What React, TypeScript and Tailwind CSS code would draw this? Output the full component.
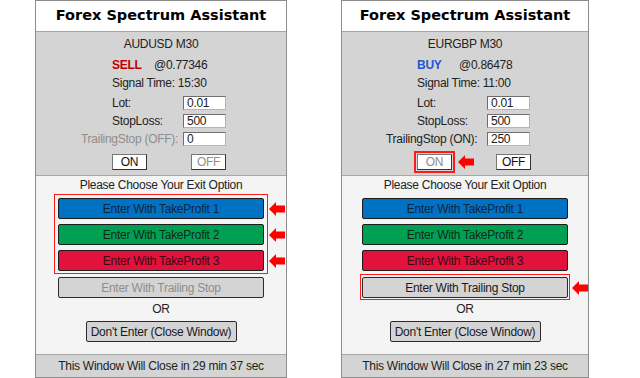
import React from 'react';

interface IPanel {
  width: string;
  indent: string;
  labelCol: string;
  pair: string;
  side: 'SELL' | 'BUY';
  price: string;
  time: string;
  stopLoss: string;
  trailing: string;
  trailOn: boolean;
  boxTakeProfit: boolean;
  boxTrailing: boolean;
  countdown: string;
  arrows: { left: string; top: string }[];
}

const txt = "font-['Liberation_Sans',Arial,sans-serif] text-[12px] tracking-[-0.27px]";

// little red pointer used for the annotations
const Arrow = ({ left, top }: { left: string; top: string }) => (
  <svg className={`absolute ${left} ${top}`} width="16" height="14" viewBox="0 0 16 14">
    <polygon points="0,7 7,0 7,3.5 16,3.5 16,10.5 7,10.5 7,14" fill="#ff0000" />
  </svg>
);

const Field = ({ value }: { value: string }) => (
  <div className="h-[14px] w-[43px] bg-white border border-[#6e6e6e] border-b-[#b5b5b5] border-r-[#b5b5b5] pl-[3px] flex items-center leading-none text-[#1a1a1a]">
    {value}
  </div>
);

function Panel(p: IPanel) {
  const disabledTrail = !p.trailOn;
  return (
    <div className={`relative flex flex-col h-[378px] ${p.width} border border-[#8c8c8c] bg-white ${txt} text-[#222]`}>
      {/* title */}
      <div className="h-[31px] shrink-0 flex items-center justify-center border-b border-[#a6a6a6] font-['DejaVu_Sans',Verdana,sans-serif] font-bold text-[14.5px] tracking-normal text-black">
        Forex Spectrum Assistant
      </div>

      {/* signal settings */}
      <div className="h-[144px] shrink-0 bg-[#d4d4d4] border-b border-[#a6a6a6] pt-[4px]">
        <div className="h-[16px] flex items-center justify-center">{p.pair}</div>
        <div className={`${p.indent}`}>
          <div className="mt-[5px] h-[16px] pl-[31px] flex items-center">
            <span className={`w-[42px] font-bold ${p.side === 'SELL' ? 'text-[#c00000]' : 'text-[#1e5ad2]'}`}>{p.side}</span>
            <span>@{p.price}</span>
          </div>
          <div className="mt-[2px] h-[16px] pl-[31px] flex items-center">Signal Time: {p.time}</div>
          <div className="mt-[3px]">
            <div className={`grid ${p.labelCol} h-[18px] items-center`}>
              <span className="pl-[31px]">Lot:</span>
              <Field value="0.01" />
            </div>
            <div className={`grid ${p.labelCol} h-[18px] items-center`}>
              <span className="pl-[31px]">StopLoss:</span>
              <Field value={p.stopLoss} />
            </div>
            <div className={`grid ${p.labelCol} h-[18px] items-center`}>
              <span className={disabledTrail ? 'text-[#8e8e8e]' : ''}>
                TrailingStop ({p.trailOn ? 'ON' : 'OFF'}):
              </span>
              <Field value={p.trailing} />
            </div>
          </div>
          <div className="mt-[6px] pl-[31px] flex gap-[44px]">
            <div className={`h-[16px] w-[35px] flex items-center justify-center bg-white border border-[#777] border-b-[#333] border-r-[#333] ${p.trailOn ? 'text-[#8e8e8e] outline outline-2 outline-[#ff1a1a] outline-offset-[1px]' : 'text-[#111]'}`}>
              ON
            </div>
            <div className={`h-[16px] w-[35px] flex items-center justify-center bg-white border border-[#777] border-b-[#333] border-r-[#333] ${p.trailOn ? 'text-[#111]' : 'text-[#8e8e8e]'}`}>
              OFF
            </div>
          </div>
        </div>
      </div>

      {/* exit options */}
      <div className="h-[179px] shrink-0 bg-[#f4f4f4] border-b border-[#a6a6a6] flex flex-col items-center">
        <div className="h-[18px] flex items-center">Please Choose Your Exit Option</div>
        <div className={`border ${p.boxTakeProfit ? 'border-[#ff1a1a]' : 'border-transparent'} px-[3px] pt-[3px] pb-[2px] flex flex-col gap-[5px]`}>
          <div className="h-[21px] w-[206px] rounded-[2px] border border-[#1c1c1c] bg-[#0072c4] flex items-center justify-center text-[#10253a]">
            Enter With TakeProfit 1
          </div>
          <div className="h-[21px] w-[206px] rounded-[2px] border border-[#1c1c1c] bg-[#00a052] flex items-center justify-center text-[#0d2a18]">
            Enter With TakeProfit 2
          </div>
          <div className="h-[21px] w-[206px] rounded-[2px] border border-[#1c1c1c] bg-[#e2123c] flex items-center justify-center text-[#3a0a12]">
            Enter With TakeProfit 3
          </div>
        </div>
        <div className={`border ${p.boxTrailing ? 'border-[#ff1a1a]' : 'border-transparent'} px-[1px] pt-[2px] pb-[1px]`}>
          <div className={`h-[21px] w-[206px] rounded-[2px] border border-[#2a2a2a] bg-[#d4d4d4] flex items-center justify-center ${p.trailOn ? 'text-[#1a1a1a]' : 'text-[#8e8e8e]'}`}>
            Enter With Trailing Stop
          </div>
        </div>
        <div className="h-[18px] flex items-center">OR</div>
        <div className="mt-[3px] h-[21px] w-[151px] rounded-[2px] border border-[#2a2a2a] bg-[#d4d4d4] flex items-center justify-center text-[#1a1a1a]">
          Don't Enter (Close Window)
        </div>
      </div>

      <div className="flex-1 bg-[#d4d4d4] flex items-center justify-center">{p.countdown}</div>

      {p.arrows.map((a, i) => (
        <Arrow key={i} left={a.left} top={a.top} />
      ))}
    </div>
  );
}

export default function App() {
  return (
    <div className="w-[640px] h-[378px] bg-white flex pl-[35px] gap-[54px] overflow-hidden">
      <Panel
        width="w-[252px]"
        indent="ml-[45px]"
        labelCol="grid-cols-[102px_43px]"
        pair="AUDUSD M30"
        side="SELL"
        price="0.77346"
        time="15:30"
        stopLoss="500"
        trailing="0"
        trailOn={false}
        boxTakeProfit={true}
        boxTrailing={false}
        countdown="This Window Will Close in 29 min 37 sec"
        arrows={[
          { left: 'left-[233px]', top: 'top-[201px]' },
          { left: 'left-[233px]', top: 'top-[227px]' },
          { left: 'left-[233px]', top: 'top-[253px]' },
        ]}
      />
      <Panel
        width="w-[248px]"
        indent="ml-[44px]"
        labelCol="grid-cols-[101px_43px]"
        pair="EURGBP M30"
        side="BUY"
        price="0.86478"
        time="11:00"
        stopLoss="500"
        trailing="250"
        trailOn={true}
        boxTakeProfit={false}
        boxTrailing={true}
        countdown="This Window Will Close in 27 min 23 sec"
        arrows={[
          { left: 'left-[116px]', top: 'top-[154px]' },
          { left: 'left-[230px]', top: 'top-[280px]' },
        ]}
      />
    </div>
  );
}
